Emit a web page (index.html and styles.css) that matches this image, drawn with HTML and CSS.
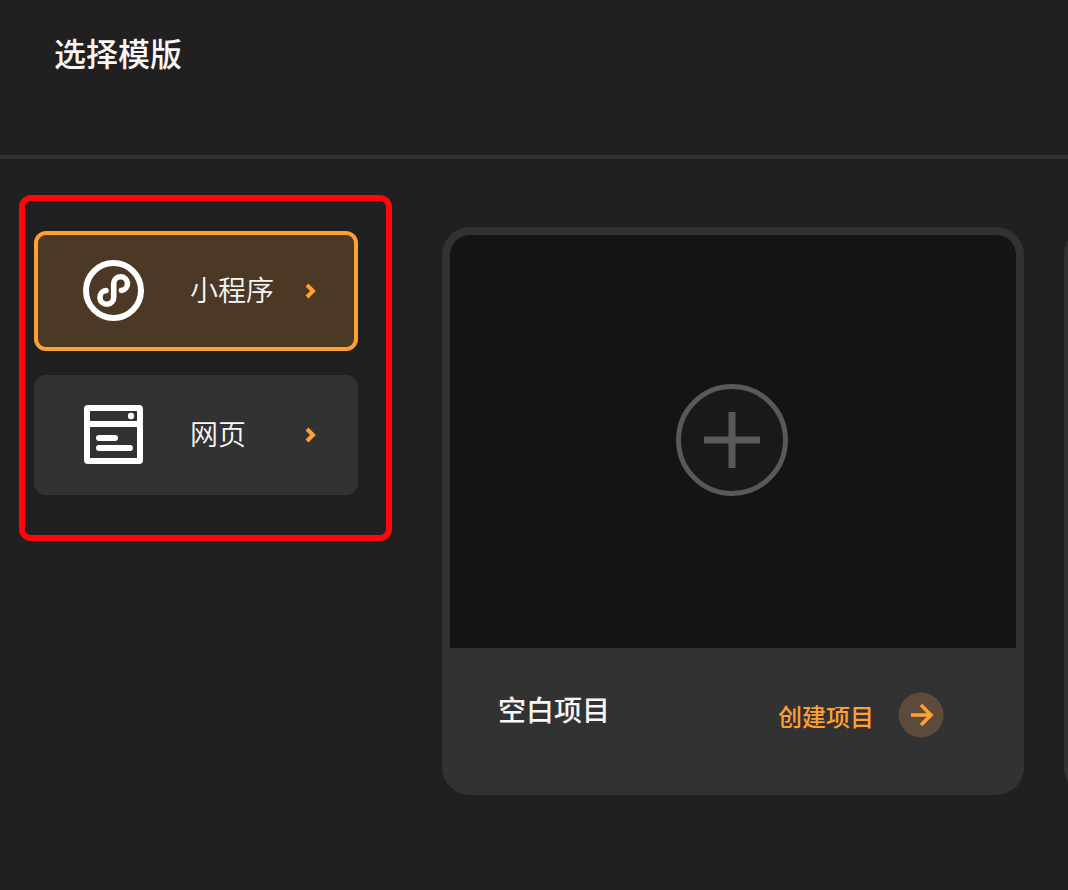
FILE: index.html
```html
<!DOCTYPE html>
<html lang="zh-CN">
<head>
    <meta charset="UTF-8">
    <meta name="viewport" content="width=device-width, initial-scale=1.0">
    <title>选择模版</title>
    <link rel="stylesheet" href="styles.css">
</head>
<body>

    <header class="header">
        <h1>选择模版</h1>
    </header>

    <main class="content">
        <!-- Project type -->
        <nav class="menu">
            <button type="button" class="menu-item active">
                <svg class="menu-icon" viewBox="0 0 61 61" fill="none" stroke="#fff" stroke-width="6">
                    <circle cx="30.5" cy="30.5" r="27.5"/>
                    <path d="M23 30.500A6.900 6.900 0 1 0 30.700 37.300V23.700A6.900 6.900 0 1 1 38.400 30.500" stroke-width="5.600" stroke-linecap="round"/>
                </svg>
                <span class="menu-label">小程序</span>
                <svg class="chevron" viewBox="0 0 12 16"><path d="M2 3l6 6-6 6" fill="none" stroke="#ffa033" stroke-width="4"/></svg>
            </button>
            <button type="button" class="menu-item">
                <svg class="menu-icon" viewBox="0 0 61 61">
                    <rect x="4" y="4" width="53" height="53" rx="1" fill="none" stroke="#fff" stroke-width="6" stroke-linejoin="round"/>
                    <path d="M4 20h53" stroke="#fff" stroke-width="6"/>
                    <circle cx="48" cy="12" r="3.200" fill="#fff"/>
                    <path d="M16 34h16M16 44h31" stroke="#fff" stroke-width="6" stroke-linecap="round"/>
                </svg>
                <span class="menu-label">网页</span>
                <svg class="chevron" viewBox="0 0 12 16"><path d="M2 3l6 6-6 6" fill="none" stroke="#ffa033" stroke-width="4"/></svg>
            </button>
        </nav>

        <!-- Templates -->
        <section class="cards">
            <article class="card">
                <div class="preview">
                    <svg class="plus" viewBox="0 0 112 112" stroke="#595959" fill="none">
                        <circle cx="56" cy="56" r="53.500" fill="#191919" stroke-width="5"/>
                        <path d="M56 28v56M28 56h56" stroke-width="7"/>
                    </svg>
                </div>
                <div class="card-footer">
                    <h2>空白项目</h2>
                    <button type="button" class="create">
                        <span>创建项目</span>
                        <svg class="arrow" viewBox="0 0 46 46">
                            <circle cx="23" cy="23" r="22.500" fill="#5d4a3a"/>
                            <path d="M13 23h20M23 13l10 10-10 10" fill="none" stroke="#ffa033" stroke-width="3.500"/>
                        </svg>
                    </button>
                </div>
            </article>
            <article class="card">
                <div class="preview"></div>
                <div class="card-footer"></div>
            </article>
        </section>
    </main>

</body>
</html>
```
FILE: styles.css
```css
* {
    box-sizing: border-box;
}

body {
    margin: 0;
    background-color: #202020;
    color: #f7f7f7;
    font-family: "Noto Sans CJK SC", sans-serif;
}

h1, h2 {
    margin: 0;
    font-weight: 500;
}

button {
    border: none;
    background: none;
    font-family: inherit;
    cursor: pointer;
}

.header {
    padding: 28px 54px 79px;
    border-bottom: 4px solid #303030;
}

.header h1 {
    font-size: 32px;
    line-height: 48px;
}

.content {
    display: flex;
    align-items: flex-start;
    gap: 50px;
    padding: 36px 0 0 19px;
}

/* Menu */
.menu {
    display: flex;
    flex: none;
    flex-direction: column;
    gap: 24px;
    padding: 30px 28px 40px 9px;
    border: 6px solid #ff070b;
    border-radius: 12px;
}

.menu-item {
    display: flex;
    align-items: center;
    width: 324px;
    height: 120px;
    padding: 0 37px 2px 45px;
    border: 4px solid #323232;
    border-radius: 12px;
    background-color: #323232;
    color: #f7f7f7;
}

.menu-item.active {
    border-color: #ffa033;
    background-color: #4b3926;
}

.menu-icon {
    width: 61px;
    height: 61px;
}

.menu-label {
    margin-left: 46px;
    padding-bottom: 2px;
    font-size: 28px;
    font-weight: 350;
    line-height: 40px;
}

.chevron {
    width: 12px;
    height: 16px;
    margin-left: auto;
    overflow: visible;
}

/* Template cards */
.cards {
    display: flex;
    flex: 1;
    gap: 40px;
    min-width: 0;
    padding-top: 32px;
    overflow: hidden;
}

.card {
    flex: none;
    width: 582px;
    padding: 8px;
    border-radius: 28px;
    background-color: #323232;
}

.preview {
    display: flex;
    align-items: center;
    justify-content: center;
    height: 413px;
    padding: 0 3px 4px 0;
    border-radius: 20px 20px 0 0;
    background-color: #131416;
}

.plus {
    width: 112px;
    height: 112px;
}

.card-footer {
    display: flex;
    align-items: flex-start;
    justify-content: space-between;
    height: 139px;
    padding: 41px 72px 0 48px;
}

.card-footer h2 {
    font-size: 28px;
    line-height: 40px;
}

.create {
    display: flex;
    align-items: center;
    gap: 24px;
    margin-top: 3px;
    padding: 0;
    color: #ffa033;
    font-size: 24px;
    font-weight: 500;
}

.arrow {
    width: 46px;
    height: 46px;
}
```
